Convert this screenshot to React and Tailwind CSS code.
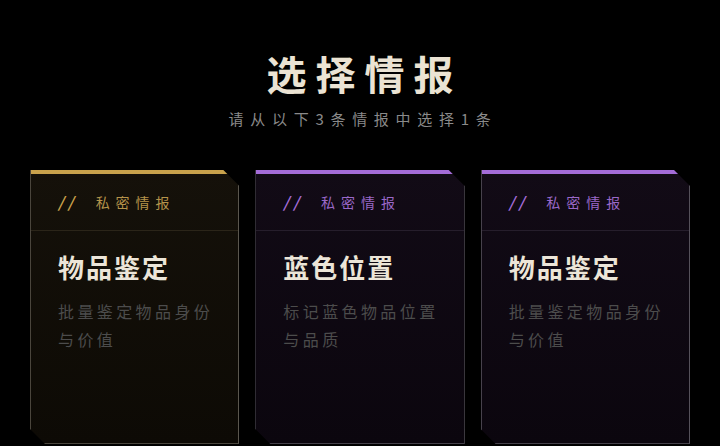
import React from "react";

const cards = [
  {
    theme: "gold",
    title: "物品鉴定",
    desc: ["批量鉴定物品身份", "与价值"],
  },
  {
    theme: "purple",
    title: "蓝色位置",
    desc: ["标记蓝色物品位置", "与品质"],
  },
  {
    theme: "purple",
    title: "物品鉴定",
    desc: ["批量鉴定物品身份", "与价值"],
  },
];

function Card({ theme, title, desc }) {
  const gold = theme === "gold";
  return (
    <div
      className={
        "flex-1 flex flex-col h-[274px] border-l border-r border-b [clip-path:polygon(0_0,calc(100%_-_16px)_0,100%_16px,100%_100%,15px_100%,0_calc(100%_-_15px))] " +
        (gold
          ? "bg-gradient-to-b from-[#15110a] to-[#0d0a05] border-l-[#4a453c] border-r-[#5a564e] border-b-[#4a463e]"
          : "bg-gradient-to-b from-[#120b16] to-[#0b060e] border-l-[#47424c] border-r-[#57535c] border-b-[#45414a]")
      }
    >
      <div className={"h-[4px] shrink-0 " + (gold ? "bg-[#c9a24c]" : "bg-[#a46cd8]")} />
      <div
        className={
          "h-[57px] shrink-0 flex items-center pl-[27px] border-b " +
          (gold ? "border-b-[#2b2519]" : "border-b-[#261e2c]")
        }
      >
        <span
          className={
            "text-[15px] font-bold italic tracking-[4px] " +
            (gold ? "text-[#c9a24c]" : "text-[#a46cd8]")
          }
        >
          //
        </span>
        <span
          className={
            "ml-[18px] text-[14px] tracking-[6px] " +
            (gold ? "text-[#b5934a]" : "text-[#9a68c8]")
          }
        >
          私密情报
        </span>
      </div>
      <div className="pl-[27px] pt-[19px]">
        <div className="text-[26px] leading-[34px] font-bold tracking-[2px] text-[#ece5d8]">
          {title}
        </div>
        <div className="mt-[13px] text-[16px] leading-[28px] tracking-[3.4px] text-[#4c4c4c]">
          {desc.map((d, i) => (
            <div key={i}>{d}</div>
          ))}
        </div>
      </div>
    </div>
  );
}

export default function App() {
  return (
    <div
      className="w-[720px] h-[446px] bg-black overflow-hidden flex flex-col items-center"
      style={{ fontFamily: '"Noto Sans CJK SC", "Noto Sans", sans-serif' }}
    >
      <div className="mt-[50px] text-[40px] leading-[46px] font-bold tracking-[9px] pl-[9px] text-[#ebe3d3]">
        选择情报
      </div>
      <div className="mt-[13px] text-[15px] leading-[20px] tracking-[6.7px] pl-[6px] text-[#8a8a8a]">
        请从以下3条情报中选择1条
      </div>
      <div className="mt-[41px] w-full px-[30px] flex gap-[16px]">
        {cards.map((c, i) => (
          <Card key={i} {...c} />
        ))}
      </div>
    </div>
  );
}
